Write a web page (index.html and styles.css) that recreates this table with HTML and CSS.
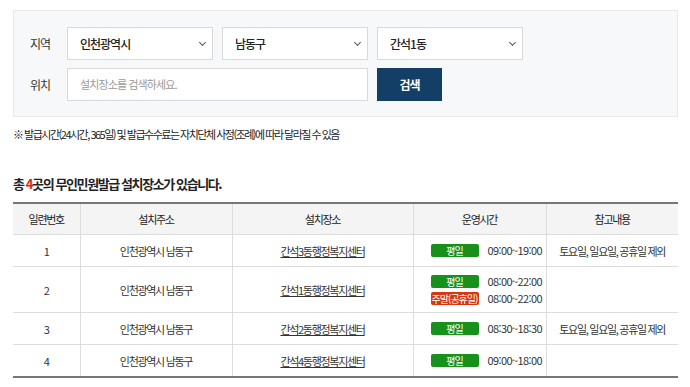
FILE: index.html
```html
<!DOCTYPE html>
<html lang="ko">
<head>
    <meta charset="utf-8" />
    <title>무인민원발급 설치장소</title>
    <link rel="stylesheet" href="styles.css">
</head>
<body>
  <div id="wrapper">
      <div class="search-box">
          <div class="search-row">
              <span class="search-label">지역</span>
              <div class="select-box">인천광역시<span class="chevron"></span></div>
              <div class="select-box">남동구<span class="chevron"></span></div>
              <div class="select-box">간석1동<span class="chevron"></span></div>
          </div>
          <div class="search-row">
              <span class="search-label">위치</span>
              <div class="text-input">설치장소를 검색하세요.</div>
              <button class="search-btn">검색</button>
          </div>
      </div>
      <p class="note">※ 발급시간(24시간, 365일) 및 발급수수료는 자치단체 사정(조례)에 따라 달라질 수 있음</p>

      <h2 class="result-title">총 <em>4</em>곳의 무인민원발급 설치장소가 있습니다.</h2>

      <table class="place-table">
          <colgroup>
              <col class="col-no">
              <col class="col-addr">
              <col class="col-place">
              <col class="col-time">
              <col>
          </colgroup>
          <thead>
              <tr>
                  <th>일련번호</th>
                  <th>설치주소</th>
                  <th>설치장소</th>
                  <th>운영시간</th>
                  <th>참고내용</th>
              </tr>
          </thead>
          <tbody>
              <tr>
                  <td>1</td>
                  <td>인천광역시 남동구</td>
                  <td><a href="#">간석3동행정복지센터</a></td>
                  <td class="time-cell">
                      <div class="hours"><span class="badge weekday">평일</span>09:00~19:00</div>
                  </td>
                  <td>토요일, 일요일, 공휴일 제외</td>
              </tr>
              <tr class="tall">
                  <td>2</td>
                  <td>인천광역시 남동구</td>
                  <td><a href="#">간석1동행정복지센터</a></td>
                  <td class="time-cell">
                      <div class="hours"><span class="badge weekday">평일</span>08:00~22:00</div>
                      <div class="hours"><span class="badge holiday">주말(공휴일)</span>08:00~22:00</div>
                  </td>
                  <td></td>
              </tr>
              <tr>
                  <td>3</td>
                  <td>인천광역시 남동구</td>
                  <td><a href="#">간석2동행정복지센터</a></td>
                  <td class="time-cell">
                      <div class="hours"><span class="badge weekday">평일</span>08:30~18:30</div>
                  </td>
                  <td>토요일, 일요일, 공휴일 제외</td>
              </tr>
              <tr>
                  <td>4</td>
                  <td>인천광역시 남동구</td>
                  <td><a href="#">간석4동행정복지센터</a></td>
                  <td class="time-cell">
                      <div class="hours"><span class="badge weekday">평일</span>09:00~18:00</div>
                  </td>
                  <td></td>
              </tr>
          </tbody>
      </table>
  </div>
</body>
</html>
```

FILE: styles.css
```css
body{
    margin: 0;
    background: #fff;
    font-family: "Noto Sans CJK KR", "Noto Sans", sans-serif;
    color: #333;
}

#wrapper{
    padding: 10px 12px 0 13px;
}

.search-box{
    background: #f7f8fa;
    border: 1px solid #e6e8eb;
    padding: 16px 16px 15px 16px;
    display: flex;
    flex-direction: column;
    gap: 8px;
}

.search-row{
    display: flex;
    align-items: center;
    gap: 9px;
}

.search-label{
    width: 28px;
    font-size: 12px;
    letter-spacing: -1px;
    color: #333;
}

.select-box{
    position: relative;
    box-sizing: border-box;
    width: 146px;
    height: 33px;
    line-height: 31px;
    background: #fff;
    border: 1px solid #d9d9d9;
    padding-left: 12px;
    font-size: 12px;
    font-weight: 500;
    letter-spacing: -1px;
    color: #222;
}

.chevron{
    position: absolute;
    right: 7px;
    top: 12px;
    width: 4px;
    height: 4px;
    border-right: 1px solid #555;
    border-bottom: 1px solid #555;
    transform: rotate(45deg);
}

.text-input{
    box-sizing: border-box;
    width: 301px;
    height: 33px;
    line-height: 31px;
    background: #fff;
    border: 1px solid #d9d9d9;
    padding-left: 12px;
    font-size: 11px;
    letter-spacing: -0.9px;
    color: #999;
}

.search-btn{
    width: 65px;
    height: 33px;
    border: 0;
    background: #133e66;
    color: #fff;
    font-family: inherit;
    font-size: 12px;
    font-weight: bold;
    letter-spacing: -1px;
}

.note{
    margin: 9px 0 0 0;
    font-size: 11px;
    letter-spacing: -1.5px;
    color: #222;
}

.result-title{
    margin: 32px 0 9px 0;
    font-size: 13px;
    font-weight: bold;
    letter-spacing: -1.4px;
    color: #222;
}

.result-title em{
    font-style: normal;
    color: #e0241b;
}

.place-table{
    width: 665px;
    border-collapse: collapse;
    border-top: 2px solid #777;
    border-bottom: 2px solid #777;
    font-size: 11px;
    letter-spacing: -1.3px;
    text-align: center;
}

.col-no{ width: 67px; }
.col-addr{ width: 152px; }
.col-place{ width: 181px; }
.col-time{ width: 133px; }

.place-table th{
    height: 30px;
    padding: 0;
    background: #f4f4f4;
    font-weight: normal;
    color: #222;
    border-left: 1px solid #ddd;
    border-bottom: 1px solid #ddd;
}

.place-table td{
    height: 31px;
    padding: 0;
    border-left: 1px solid #ddd;
    border-bottom: 1px solid #ddd;
    color: #333;
}

.place-table tr.tall td{
    height: 45px;
}

.place-table th:first-child,
.place-table td:first-child{
    border-left: 0;
}

.place-table a{
    color: #333;
}

.place-table td.time-cell{
    padding-left: 17px;
}

.hours{
    display: flex;
    align-items: center;
    gap: 9px;
    letter-spacing: -0.6px;
    line-height: 17px;
}

.badge{
    display: inline-block;
    width: 48px;
    height: 13px;
    line-height: 13px;
    border-radius: 2px;
    font-size: 10px;
    letter-spacing: -1px;
    color: #fff;
    text-align: center;
}

.weekday{
    background: #17911c;
}

.holiday{
    background: #d8360f;
}
```
